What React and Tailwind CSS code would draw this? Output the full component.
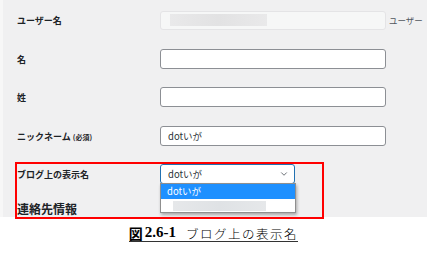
import { ChevronDown } from "lucide-react";

const jp = { fontFamily: '"Noto Sans CJK JP", "Noto Sans", sans-serif' };

function Row({ label, children, className = "" }) {
  return (
    <div className={`flex items-center h-[20px] ${className}`}>
      <div className="w-[143px] shrink-0 text-[9px] font-semibold text-[#1d2327] leading-none">{label}</div>
      {children}
    </div>
  );
}

function TextBox({ value = "" }) {
  return (
    <div className="w-[226px] shrink-0 h-[20px] bg-white border border-[#8c8f94] rounded-[3px] px-[7px] flex items-center text-[9.5px] text-[#2c3338]">
      {value}
    </div>
  );
}

export default function App() {
  return (
    <div className="w-[427px] h-[253px] bg-white overflow-hidden" style={jp}>
      <div className="relative h-[217px] bg-[#f0f0f1] border-l-[3px] border-[#f7f7f7] pl-[14px] pt-[10px]">
        <Row label="ユーザー名">
          <div className="w-[226px] shrink-0 h-[19px] bg-[#f6f7f7] border border-[#e4e4e6] rounded-[3px] flex items-center px-[9px]">
            <div className="w-[97px] h-[12px] bg-gradient-to-r from-[#e9e9ea] via-[#e2e2e3] to-[#e9e9ea]" />
          </div>
          <span className="ml-[3px] text-[8.5px] text-[#50575e] whitespace-nowrap">ユーザー</span>
        </Row>
        <Row label="名" className="mt-[19px]">
          <TextBox />
        </Row>
        <Row label="姓" className="mt-[18px]">
          <TextBox />
        </Row>
        <Row
          label={
            <span>
              ニックネーム <span className="text-[7px]">(必須)</span>
            </span>
          }
          className="mt-[19px]"
        >
          <TextBox value="dotいが" />
        </Row>
        <Row label="ブログ上の表示名" className="mt-[18px]">
          <div className="w-[135px] shrink-0 h-[20px] bg-white border border-[#2271b1] rounded-[3px] pl-[7px] pr-[5px] flex items-center justify-between text-[9.5px] text-[#2c3338]">
            <span>dotいが</span>
            <ChevronDown size={10} strokeWidth={2} className="text-[#50575e]" />
          </div>
        </Row>
        <div className="mt-[19px] text-[12px] font-semibold text-[#1d2327] leading-none">連絡先情報</div>

        {/* open dropdown list */}
        <div className="absolute left-[157px] top-[183px] w-[136px] bg-white border border-[#8f8f8f] shadow-[1px_2px_3px_rgba(0,0,0,0.3)]">
          <div className="h-[15px] bg-[#1e90ff] text-white text-[9.5px] px-[6px] flex items-center">dotいが</div>
          <div className="h-[13px] flex items-center px-[12px]">
            <div className="w-[93px] h-[10px] bg-gradient-to-r from-[#e6e8ea] via-[#dfe2e5] to-[#e6e8ea]" />
          </div>
        </div>

        {/* annotation frame */}
        <div className="absolute left-[12px] top-[162px] w-[309px] h-[57px] border-2 border-[#ff0000]" />
      </div>
      <div className="flex justify-center pt-[8px]">
        <div className="flex items-end border-b border-[#333] pb-[1px] text-black leading-none">
          <span className="text-[14px] font-bold">図</span>
          <span className="text-[15px] font-bold ml-[2px]" style={{ fontFamily: '"Liberation Serif", serif' }}>2.6-1</span>
          <span className="text-[12.5px] font-light tracking-[1.5px] ml-[10px]">ブログ上の表示名</span>
        </div>
      </div>
    </div>
  );
}
